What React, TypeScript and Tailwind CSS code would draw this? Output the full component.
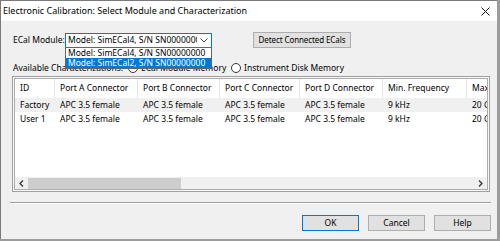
import React from 'react'

const font = { fontFamily: '"Noto Sans", "Open Sans", sans-serif' }

const columns = [
  { label: 'ID', w: 'w-[40px]' },
  { label: 'Port A Connector', w: 'w-[83px]' },
  { label: 'Port B Connector', w: 'w-[82px]' },
  { label: 'Port C Connector', w: 'w-[80px]' },
  { label: 'Port D Connector', w: 'w-[83px]' },
  { label: 'Min. Frequency', w: 'w-[84px]' },
  { label: 'Max. Frequency', w: 'w-[84px]' },
]

const rows = [
  ['Factory', 'APC 3.5 female', 'APC 3.5 female', 'APC 3.5 female', 'APC 3.5 female', '9 kHz', '20 GHz'],
  ['User 1', 'APC 3.5 female', 'APC 3.5 female', 'APC 3.5 female', 'APC 3.5 female', '9 kHz', '20 GHz'],
]

const Radio = ({ label }: { label: string }) => (
  <div className="flex items-center gap-[3px]">
    <span className="w-[10px] h-[10px] rounded-full border border-[#333] bg-white shrink-0" />
    <span className="whitespace-nowrap">{label}</span>
  </div>
)

const DialogButton = ({ label, primary }: { label: string; primary?: boolean }) => (
  <button
    className={`h-[16px] flex items-center justify-center bg-[#e1e1e1] border ${
      primary ? 'border-[#0078d7]' : 'border-[#adadad]'
    } w-[57px]`}
  >
    {label}
  </button>
)

export default function App() {
  return (
    <div
      className="w-[500px] h-[241px] bg-[#9c9c9c] text-[8.5px] text-black overflow-hidden"
      style={font}
    >
      <div className="w-[497px] h-[239px] bg-[#f0f0f0] border-l border-t border-[#7a7a7a] flex flex-col relative">
        {/* Title bar */}
        <div className="h-[20px] bg-white flex items-center justify-between pl-[2px] pr-[5px] shrink-0">
          <span className="text-[9px]">Electronic Calibration: Select Module and Characterization</span>
          <svg width="9" height="9" viewBox="0 0 9 9" className="mr-[2px]">
            <path d="M0.5 0.5 L8.5 8.5 M8.5 0.5 L0.5 8.5" stroke="#111" strokeWidth="1" />
          </svg>
        </div>

        {/* Module row */}
        <div className="flex items-center mt-[11px] pl-[12px] h-[16px]">
          <span className="w-[52px]">ECal Module:</span>
          <div className="w-[147px] h-[15px] border border-[#0078d7] bg-white flex items-center pl-[2px] pr-[3px] overflow-hidden">
            <span className="flex-1 whitespace-nowrap overflow-hidden">Model: SimECal4, S/N SN00000000</span>
            <svg width="8" height="5" viewBox="0 0 8 5" className="ml-[3px] shrink-0">
              <path d="M0.5 0.5 L4 4 L7.5 0.5" stroke="#444" strokeWidth="1" fill="none" />
            </svg>
          </div>
          <button className="ml-[41px] w-[98px] h-[16px] flex items-center justify-center bg-[#e1e1e1] border border-[#adadad] whitespace-nowrap text-[8px] tracking-[-0.1px]">
            Detect Connected ECals
          </button>
        </div>

        {/* Dropdown list overlay */}
        <div className="absolute left-[64px] top-[46px] w-[147px] border border-[#646464] bg-white z-10">
          <div className="h-[10px] leading-[10px] pl-[2px] whitespace-nowrap">Model: SimECal4, S/N SN00000000</div>
          <div className="h-[10px] leading-[10px] pl-[2px] whitespace-nowrap bg-[#0078d7] text-white">
            Model: SimECal2, S/N SN00000000
          </div>
        </div>

        {/* Characterization source row */}
        <div className="flex items-center mt-[14px] pl-[12px] h-[12px]">
          <span className="w-[115px] whitespace-nowrap">Available Characterizations:</span>
          <div className="w-[103px]">
            <Radio label="ECal Module Memory" />
          </div>
          <Radio label="Instrument Disk Memory" />
        </div>

        {/* List view */}
        <div className="mt-[2px] ml-[11px] w-[478px] h-[116px] border border-[#a0a0a0] bg-[#f7f7f7] p-[1px]">
          <div className="w-full h-full border border-[#adadad] bg-white flex flex-col overflow-hidden">
            <div className="flex h-[19px] shrink-0">
              {columns.map((c) => (
                <div
                  key={c.label}
                  className={`${c.w} shrink-0 flex items-center pl-[5px] border-r border-[#e5e5e5] whitespace-nowrap`}
                >
                  {c.label}
                </div>
              ))}
            </div>
            {rows.map((r, i) => (
              <div key={i} className={`flex h-[14px] shrink-0 ${i === 0 ? 'bg-[#f0f0f0]' : ''}`}>
                {r.map((cell, j) => (
                  <div
                    key={j}
                    className={`${columns[j].w} shrink-0 flex items-center pl-[5px] whitespace-nowrap`}
                  >
                    {cell}
                  </div>
                ))}
              </div>
            ))}
            <div className="flex-1" />
            {/* Horizontal scrollbar */}
            <div className="h-[12px] bg-[#f0f0f0] flex items-center shrink-0">
              <div className="w-[13px] flex justify-center">
                <svg width="5" height="7" viewBox="0 0 5 7">
                  <path d="M4 0.5 L1 3.5 L4 6.5" stroke="#333" strokeWidth="1.3" fill="none" />
                </svg>
              </div>
              <div className="w-[153px] h-[11px] bg-[#cdcdcd]" />
              <div className="flex-1" />
              <div className="w-[13px] flex justify-center">
                <svg width="5" height="7" viewBox="0 0 5 7">
                  <path d="M1 0.5 L4 3.5 L1 6.5" stroke="#333" strokeWidth="1.3" fill="none" />
                </svg>
              </div>
            </div>
          </div>
        </div>

        {/* Etched separator */}
        <div className="mt-[10px] ml-[9px] w-[481px] border-t border-[#a0a0a0] border-b border-b-white" />

        {/* Dialog buttons */}
        <div className="flex justify-end gap-[9px] mt-[11px] pr-[6px]">
          <DialogButton label="OK" primary />
          <DialogButton label="Cancel" />
          <DialogButton label="Help" />
        </div>
      </div>
    </div>
  )
}
